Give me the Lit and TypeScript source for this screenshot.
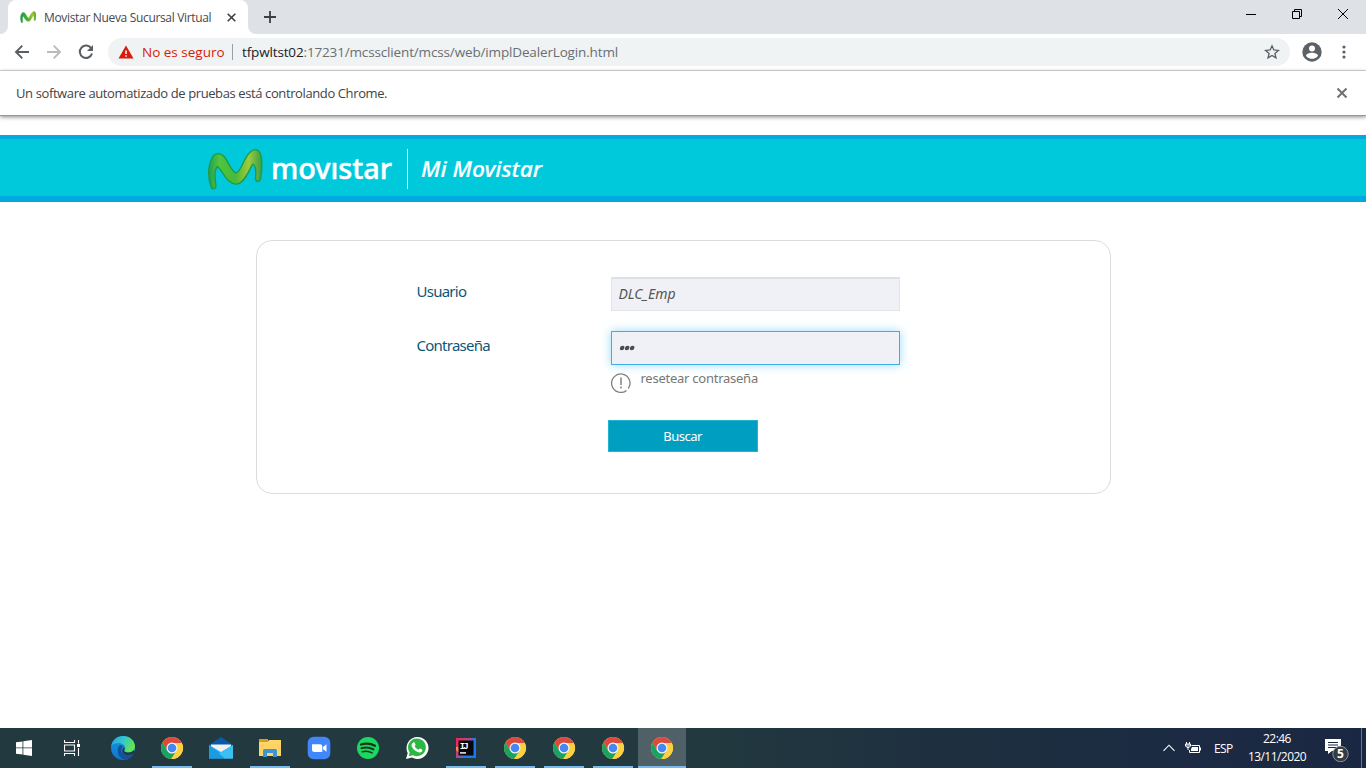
import { LitElement, html, css, svg } from "lit";
import { customElement } from "lit/decorators.js";

const chromeIcon = html`<svg width="24" height="24" viewBox="0 0 48 48">
  <circle cx="24" cy="24" r="22" fill="#fdd040" />
  <path d="M24 24L43 13A22 22 0 0 0 5 13L14.5 29.5Z" fill="#dc4a3e" />
  <path d="M5 13A22 22 0 0 0 22.5 46L33.5 29.5L24 24L14.5 29.5Z" fill="#1aa260" />
  <path d="M24 14H43.6A22 22 0 0 1 22.5 46L33.5 29Z" fill="#fdd040" />
  <circle cx="24" cy="24" r="11" fill="#f4f6f4" />
  <circle cx="24" cy="24" r="8.6" fill="#4688f1" />
</svg>`;

const edgeIcon = html`<svg width="24" height="24" viewBox="0 0 24 24">
  <defs>
    <linearGradient id="e1" x1="0" y1="0" x2="1" y2="0.4"><stop offset="0" stop-color="#249ee0" /><stop offset=".5" stop-color="#2fc6d0" /><stop offset="1" stop-color="#62e452" /></linearGradient>
    <linearGradient id="e2" x1="0" y1="0" x2="0" y2="1"><stop offset="0" stop-color="#1993dd" /><stop offset="1" stop-color="#0f75cf" /></linearGradient>
  </defs>
  <circle cx="12" cy="12" r="12" fill="url(#e2)" />
  <path d="M.2 10C1.500 4 6 0 12 0c7 0 12 5 12 10.500c0 4-3 6-6.500 6c-3 0-4.800-1.200-4-2.500c2-3-1-7-5.500-7C4.500 7 1.500 8 .2 10z" fill="url(#e1)" />
  <path d="M9 9c-4 3-3 13 5 15c4-.5 7-3 8.500-6c-5 2.500-13 1-12-5c.2-1.500 1-2 1.500-2.500c-.8-1-2-1.600-3-1.500z" fill="#12529b" />
  <path d="M13.400 14c-1 1.500 1.500 2.600 4 2.500c2 0 4-.8 5.300-2.500l1 2l-1.200 2c-4 1.800-10 1.500-11-2c-.4-2 .4-4 1.700-4.700c.6 1 .7 2 .2 2.700z" fill="#233941" />
</svg>`;

const mailIcon = html`<svg width="24" height="24" viewBox="0 0 24 24">
  <path d="M0 9L12 1L24 9V22H0z" fill="#0a5aa8" />
  <path d="M2 8.500H22V16H2z" fill="#f2f2f2" />
  <path d="M0 9L12 16L24 9V22.500H0z" fill="#2bb1ee" />
  <path d="M0 9L18 22.500H0z" fill="#1a9be6" />
  <path d="M24 9L10 17.500L16 22.500H24z" fill="#3cc0f2" />
</svg>`;

const folderIcon = html`<svg width="24" height="24" viewBox="0 0 24 24">
  <path d="M1 3h9v4H1z" fill="#e09b10" />
  <path d="M1 6h8.500l1.500-2H23v16H1z" fill="#fed667" />
  <path d="M1 8H23v12H1z" fill="#fdd062" opacity=".7" />
  <path d="M5 21v-6.500q0-1.500 1.500-1.500h11q1.500 0 1.500 1.500V21h-4v-4H9v4z" fill="#3f95d3" />
</svg>`;

const zoomIcon = html`<svg width="24" height="24" viewBox="0 0 24 24">
  <rect x=".7" y=".7" width="22.600" height="22.600" rx="6" fill="#4087fb" />
  <path d="M5 8.200h8q2.300 0 2.300 2.300V16H7.500Q5 16 5 13.500z" fill="#fff" /><path d="M16 11l3.500-2.700v7.400L16 13.200z" fill="#fff" />
</svg>`;

const spotifyIcon = html`<svg width="24" height="24" viewBox="0 0 24 24">
  <circle cx="12" cy="12" r="11" fill="#1ed760" />
  <g fill="none" stroke="#12391f" stroke-linecap="round"><path d="M5 8.500c5-1.500 10-1 14 1.200" stroke-width="2.300" /><path d="M5.500 12.200c4.500-1.200 8.500-.8 12 1.200" stroke-width="1.900" /><path d="M6.200 15.700c3.500-.9 7-.6 10 1.100" stroke-width="1.500" /></g>
</svg>`;

const whatsIcon = html`<svg width="24" height="24" viewBox="0 0 24 24">
  <path d="M1 23l1.700-6A11 11 0 1 1 7 21.500z" fill="#fff" />
  <path d="M3.700 20.300l1-3.800A8.900 8.900 0 1 1 8 19.300z" fill="#2cb742" />
  <path d="M8.300 6.500c.7-.5 1.300-.2 1.500.4l.7 1.700c.2.600-.8 1.300-.8 1.700c.7 1.500 2 2.700 3.700 3.400c.5.100 1-1.300 1.600-1.200l2 1c.7.300.3 1.600-.3 2.200c-1 .900-2.500 1-4 .4c-2.800-1-5-3.200-6-5.800c-.5-1.500 0-3 1.600-3.800z" fill="#fff" />
</svg>`;

const ijIcon = html`<svg width="24" height="24" viewBox="0 0 24 24">
  <defs><linearGradient id="ij" x1="0" y1=".2" x2="1" y2=".8"><stop offset="0" stop-color="#f0265c" /><stop offset=".45" stop-color="#9b5691" /><stop offset=".6" stop-color="#2d72e8" /><stop offset="1" stop-color="#087cfa" /></linearGradient></defs>
  <rect x="2" y="2" width="20" height="20" fill="url(#ij)" />
  <path d="M2 11h4v5H4l-2-2z" fill="#f98b3c" />
  <rect x="4.500" y="4.500" width="15" height="15" fill="#0a0508" />
  <text x="5.700" y="13" font-family="Liberation Mono" font-weight="700" font-size="9" textLength="9" fill="#fff">IJ</text>
  <path d="M6 16.200h6v1.400H6z" fill="#fff" />
</svg>`;

const mShape = svg`
  <path d="M5 40C1 30 1 18 6 9C9 4.500 14 4.500 18 9C23 16 25.500 24.500 30 25C35 23 37 9 45 3C50 -.5 54 3 55 10C56 20 55 26 54 31C53 34.500 49 34.500 49 30C49.300 24 50 18 46.500 16C43 20 39 34.500 31 36C21 37.500 16.500 23 11 18.500C6.500 23 9 32 9.500 38C9.500 41 6.500 41.500 5 40Z"/>`;

@customElement("app-root")
export class AppRoot extends LitElement {
  static styles = css`
    :host { display: flex; flex-direction: column; width: 1366px; height: 768px; overflow: hidden; background: #fff; font-family: "Open Sans", "Noto Sans", sans-serif; }
    * { box-sizing: border-box; }
    svg { display: block; flex: none; }
    span { white-space: nowrap; }
    .tabs { height: 34px; flex: none; background: #dee1e6; display: flex; align-items: flex-start; }
    .edge { width: 8px; height: 34px; background: #fff; }
    .edge i { display: block; height: 34px; background: #dee1e6; border-bottom-right-radius: 8px; }
    .edge.r i { border-radius: 0 0 0 8px; }
    .tab { width: 240px; height: 34px; background: #fff; border-radius: 8px 8px 0 0; display: flex; align-items: center; padding: 0 0 0 12px; }
    .title { width: 168px; margin-left: 8px; font-size: 12px; letter-spacing: -0.33px; color: #45494d; }
    .tabx { margin-left: 15px; }
    .plus { margin: 11px 0 0 8px; }
    .winbtns { margin-left: auto; display: flex; gap: 34px; padding: 8px 17px 0 0; }
    .bar { height: 37px; flex: none; border-bottom: 1px solid #d9dadf; display: flex; align-items: center; padding: 0 13px 0 14px; }
    .nav { display: flex; gap: 16px; }
    .omni { width: 1182px; height: 28px; margin-left: 14px; border-radius: 14px; background: #eff3f4; display: flex; align-items: center; padding: 0 10px; font-size: 14px; }
    .insecure { width: 82px; margin-left: 8px; color: #d91b0b; font-size: 13.500px; }
    .sep { width: 1px; height: 16px; background: #9aa0a6; margin: 0 9px 0 8px; }
    .url { width: 377px; color: #6a6e72; font-size: 13.500px; letter-spacing: -0.15px; }
    .url b { font-weight: 400; color: #202124; }
    .star { margin-left: auto; }
    .avatar { margin-left: 12px; }
    .dots { margin-left: 20px; }
    .info { height: 45px; flex: none; border-bottom: 1px solid #999; box-shadow: 0 1px 4px #888; display: flex; align-items: center; justify-content: space-between; padding: 0 18px 0 16px; font-size: 13px; letter-spacing: -0.39px; color: #3f4348; }
    .page { flex: 1; display: flex; flex-direction: column; align-items: center; padding-top: 19px; font-family: "Noto Sans", sans-serif; }
    .head { width: 100%; height: 67px; background: #00c9dc; border-top: 4px solid #00a9e0; border-bottom: 6px solid #00a9e0; padding-left: 206px; }
    .card { width: 855px; height: 254px; margin-top: 38px; border: 1px solid #dcdcdc; border-radius: 16px; padding: 36px 0 0 160px; display: grid; grid-template-columns: 194px 290px; grid-template-rows: 54px 90px 40px; align-content: start; }
    .label { color: #0b5778; font-size: 15px; letter-spacing: -0.75px; padding-top: 4px; line-height: 20px; }
    .input { display: flex; align-items: center; width: 289px; height: 34px; border: 1px solid #e3e4e8; border-top: 2px solid #dfe0e4; background: #f0f1f6; padding: 0 0 2px 7px; font-style: italic; color: #555; font-size: 14px; }
    .input.focus { border: 1px solid #3daee9; box-shadow: 0 0 9px #9ad9f7; padding-bottom: 0; }
    .reset { display: flex; gap: 10px; margin-top: 3px; color: #777; font-size: 13px; letter-spacing: -0.25px; line-height: 20px; }
    .reset svg { margin-top: 5px; }
    .btn { grid-column: 2; width: 150px; height: 32px; margin: -1px 0 0 -3px; border: 1px solid #22b5cf; background: #009fc2; color: #fff; font-size: 13px; letter-spacing: -0.5px; display: flex; align-items: center; justify-content: center; }
    .task { height: 40px; flex: none; display: flex; background: linear-gradient(90deg, #22393f 0, #22393f 52%, #1e303f 68%, #1c2c42 82%, #1a2742 100%); color: #fff; }
    .item { width: 48px; height: 40px; display: flex; align-items: center; justify-content: center; }
    .apps { display: flex; gap: 1px; margin-left: 3px; }
    .item.open { background: linear-gradient(#76b9ed, #76b9ed) 50% 100% / 40px 2px no-repeat; }
    .item.active { background: linear-gradient(#76b9ed, #76b9ed) 0 100% / 48px 2px no-repeat, #4f6167; }
    .tray { margin-left: auto; display: flex; align-items: center; font-size: 12px; }
    .battery { margin-left: 10px; }
    .lang { width: 19px; margin-left: 12px; font-size: 12px; letter-spacing: -0.6px; }
    .clock { width: 60px; margin-left: 14px; line-height: 18px; font-size: 12px; letter-spacing: -0.55px; display: flex; flex-direction: column; align-items: center; }
    .note { margin-left: 16px; }
    .desk { width: 1px; height: 40px; margin: 0 4px 0 10px; background: #6d7684; }
  `;

  render() {
    return html`
      <div class="tabs">
        <div class="edge"><i></i></div>
        <div class="tab">
          <svg width="16" height="16" viewBox="0 0 56 42"><defs><linearGradient id="fg"><stop offset="0" stop-color="#1f9a48" /><stop offset=".5" stop-color="#4fae32" /><stop offset=".8" stop-color="#a6c82c" /><stop offset="1" stop-color="#3f9f3a" /></linearGradient></defs><g fill="url(#fg)" stroke="url(#fg)" stroke-width="2">${mShape}</g></svg>
          <span class="title">Movistar Nueva Sucursal Virtual</span>
          <svg class="tabx" width="9" height="9" viewBox="0 0 9 9"><path d="M.7.7l7.600 7.600M8.300.7L.7 8.300" stroke="#3c4043" stroke-width="1.600" /></svg>
        </div>
        <div class="edge r"><i></i></div>
        <svg class="plus" width="12" height="12" viewBox="0 0 12 12"><path d="M6 0v12M0 6h12" stroke="#3c4043" stroke-width="1.800" /></svg>
        <div class="winbtns">
          <svg width="12" height="12" viewBox="0 0 12 12"><path d="M1 6.500h10" stroke="#000" /></svg>
          <svg width="12" height="12" viewBox="0 0 12 12"><path d="M1.500 3.500h7v7h-7zM3.500 3V1.500h7v7H9" fill="none" stroke="#000" /></svg>
          <svg width="12" height="12" viewBox="0 0 12 12"><path d="M1 1l10 10M11 1L1 11" stroke="#000" /></svg>
        </div>
      </div>
      <div class="bar">
        <div class="nav">
          <svg width="16" height="16" viewBox="0 0 16 16"><path d="M15 8H2.500M8.300 1.700L2 8l6.300 6.300" fill="none" stroke="#5a5e63" stroke-width="1.900" /></svg>
          <svg width="16" height="16" viewBox="0 0 16 16"><path d="M1 8h12.500M7.700 1.700L14 8l-6.300 6.300" fill="none" stroke="#b9bbbe" stroke-width="1.900" /></svg>
          <svg width="16" height="16" viewBox="0 0 16 16"><path d="M13.300 4.500A6.200 6.200 0 1 0 14 9.500" fill="none" stroke="#5a5e63" stroke-width="2" /><path d="M15 1v6H9z" fill="#5a5e63" /></svg>
        </div>
        <div class="omni">
          <svg width="16" height="14" viewBox="0 0 16 14"><path d="M8 .5L15.500 13.500H.5z" fill="#d91b0b" /><path d="M7.300 5.500h1.500v3.500H7.300zM7.300 10.200h1.500v1.500H7.300z" fill="#fff" /></svg>
          <span class="insecure">No es seguro</span><div class="sep"></div>
          <span class="url"><b>tfpwltst02</b>:17231/mcssclient/mcss/web/implDealerLogin.html</span>
          <svg class="star" width="16" height="16" viewBox="0 0 16 16"><path d="M8 1.800l1.800 4.200 4.600.4-3.500 3 1.100 4.500L8 11.500l-4 2.400 1.100-4.500-3.500-3L6.200 6z" fill="none" stroke="#5a5e63" stroke-width="1.300" /></svg>
        </div>
        <svg class="avatar" width="20" height="20" viewBox="0 0 20 20"><circle cx="10" cy="10" r="9.700" fill="#5a6167" /><circle cx="10" cy="6.500" r="3" fill="#fff" /><path d="M4 13.700c.5-4 11.500-4 12 0c-3 4.200-9 4.200-12 0z" fill="#fff" /></svg>
        <svg class="dots" width="4" height="14" viewBox="0 0 4 14"><g fill="#5a6167"><circle cx="2" cy="2" r="1.600" /><circle cx="2" cy="7" r="1.600" /><circle cx="2" cy="12" r="1.600" /></g></svg>
      </div>
      <div class="info"><span>Un software automatizado de pruebas está controlando Chrome.</span>
        <svg width="12" height="12" viewBox="0 0 12 12"><path d="M1.500 1.500l9 9M10.500 1.500l-9 9" stroke="#6c7277" stroke-width="2" /></svg>
      </div>
      <div class="page">
        <div class="head">
          <svg width="350" height="57" viewBox="0 0 350 57">
            <defs>
              <linearGradient id="mg" x1="0" y1="0" x2="1" y2="0"><stop offset="0" stop-color="#25a050" /><stop offset=".2" stop-color="#4fc540" /><stop offset=".5" stop-color="#48b93c" /><stop offset=".75" stop-color="#9fcb3b" /><stop offset="1" stop-color="#35a04a" /></linearGradient>
            </defs>
            <g transform="translate(.5 9)" fill="url(#mg)" stroke="#1f9a45" stroke-width="1.300">${mShape}</g>
            <text x="65" y="40" font-family="Noto Sans" font-weight="500" font-size="29" fill="#fff" stroke="#fff" stroke-width=".5" textLength="121" lengthAdjust="spacingAndGlyphs">movıstar</text>
            <path d="M201.500 10v40" stroke="#fff" />
            <text x="215" y="38" font-family="Noto Sans" font-style="italic" font-weight="500" font-size="22" fill="#fff" stroke="#fff" stroke-width=".2" textLength="121" lengthAdjust="spacingAndGlyphs">Mi Movistar</text>
          </svg>
        </div>
        <div class="card">
          <span class="label">Usuario</span><div class="input"><span>DLC_Emp</span></div>
          <span class="label">Contraseña</span>
          <div><div class="input focus"><svg width="18" height="8" viewBox="0 0 18 8"><g fill="#4c4c4c" transform="skewX(-12)"><circle cx="4" cy="4" r="2.200" /><circle cx="9" cy="4" r="2.200" /><circle cx="14" cy="4" r="2.200" /></g></svg></div>
            <div class="reset"><svg width="20" height="20" viewBox="0 0 20 20"><path d="M17.300 15.500A9.200 9.200 0 1 0 15.500 17.400" fill="none" stroke="#808080" stroke-width="1.300" /><path d="M10 4.500v7.500M10 13.500v2" stroke="#808080" stroke-width="1.500" /></svg><span>resetear contraseña</span></div>
          </div>
          <div class="btn"><span>Buscar</span></div>
        </div>
      </div>
      <div class="task">
        <div class="item"><svg width="16" height="16" viewBox="0 0 16 16"><path d="M0 2.300L6.500 1.400V7.500H0zM7.300 1.200L16 0V7.500H7.300zM0 8.300H6.500V14.600L0 13.700zM7.300 8.300H16V16L7.300 14.800z" fill="#fff" /></svg></div>
        <div class="item"><svg width="16" height="16" viewBox="0 0 16 16"><path d="M.5 0v2.500h10V0M.5 5h10v6H.5zM.5 16v-2.500h10V16M14.500 0v3.500M14.500 8v8" fill="none" stroke="#fff" stroke-width="1.100" /><path d="M13 4h3v3h-3z" fill="#fff" /></svg></div>
        <div class="apps">
          <div class="item">${edgeIcon}</div><div class="item open">${chromeIcon}</div><div class="item">${mailIcon}</div>
          <div class="item open">${folderIcon}</div><div class="item">${zoomIcon}</div><div class="item">${spotifyIcon}</div>
          <div class="item">${whatsIcon}</div><div class="item open">${ijIcon}</div><div class="item open">${chromeIcon}</div>
          <div class="item open">${chromeIcon}</div><div class="item open">${chromeIcon}</div><div class="item active">${chromeIcon}</div>
        </div>
        <div class="tray">
          <svg width="12" height="8" viewBox="0 0 12 8"><path d="M.5 6.800L6 1.200l5.500 5.600" fill="none" stroke="#fff" stroke-width="1.100" /></svg>
          <svg class="battery" width="17" height="12" viewBox="0 0 17 12"><path d="M6.500 3.500h8v7h-10V8M15.500 5.500v3" fill="none" stroke="#fff" /><path d="M1.500 0v2M4.500 0v2M3 5.500v2.500" stroke="#fff" /><path d="M.5 2h5v2L4 5.500H2L.5 4z" fill="#8d95a1" stroke="#fff" /><path d="M7 5h6v4H6V7z" fill="#fff" /></svg>
          <span class="lang">ESP</span>
          <div class="clock"><span>22:46</span><span>13/11/2020</span></div>
          <svg class="note" width="28" height="28" viewBox="0 0 28 28"><path d="M2 5h16v12H9l-4 3v-3H2z" fill="#fff" /><path d="M5 8.500h10M5 11h10M5 13.500h8" stroke="#1a2742" /><circle cx="17.500" cy="20" r="7.700" fill="#343b44" stroke="#8b929a" /><text x="17.500" y="24.200" text-anchor="middle" font-family="Open Sans" font-weight="700" font-size="12" fill="#fff">5</text></svg>
          <div class="desk"></div>
        </div>
      </div>`;
  }
}
